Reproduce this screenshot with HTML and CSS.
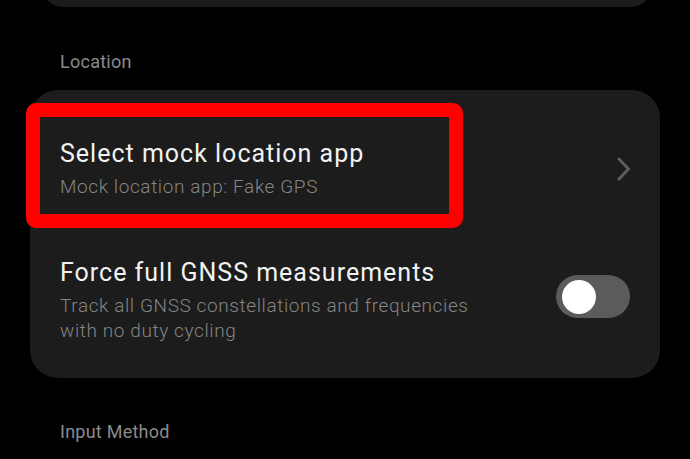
FILE: index.html
```html
<!DOCTYPE html>
<html lang="en">
<head>
<meta charset="utf-8">
<title>Developer options</title>
<link rel="stylesheet" href="styles.css">
</head>
<body>
<div class="screen">
  <div class="card card-top"></div>
  <div class="section-label label-location">Location</div>
  <div class="card card-main">
    <div class="row row-first">
      <div class="row-text">
        <div class="row-title">Select mock location app</div>
        <div class="row-sub">Mock location app: Fake GPS</div>
      </div>
      <svg class="chevron" width="14" height="24" viewBox="0 0 14 24" aria-hidden="true">
        <path d="M2 2 L11.5 12 L2 22" fill="none" stroke="#5e5e5e" stroke-width="3" stroke-linecap="round" stroke-linejoin="round"/>
      </svg>
    </div>
    <div class="row row-second">
      <div class="row-text">
        <div class="row-title">Force full GNSS measurements</div>
        <div class="row-sub">Track all GNSS constellations and frequencies<br>with no duty cycling</div>
      </div>
      <div class="toggle"><div class="knob"></div></div>
    </div>
    <div class="highlight"></div>
  </div>
  <div class="section-label label-input">Input Method</div>
</div>
</body>
</html>
```

FILE: styles.css
```css
html, body {
  margin: 0;
  padding: 0;
  background: #000;
}
body {
  font-family: Roboto, "Noto Sans", "Liberation Sans", sans-serif;
  width: 690px;
  height: 459px;
  overflow: hidden;
}
.screen {
  display: flex;
  flex-direction: column;
}
.card {
  background: #1c1c1c;
}
.card-top {
  height: 60px;
  margin: -53px 36px 0 40px;
  border-radius: 24px;
}
.section-label {
  font-size: 18px;
  line-height: 22px;
  color: #8b8b8b;
  padding-left: 60px;
  letter-spacing: 0.25px;
}
.label-location {
  margin-top: 44px;
  margin-bottom: 17px;
}
.label-input {
  margin-top: 43px;
}
.card-main {
  position: relative;
  margin: 0 30px;
  border-radius: 28px;
  padding: 0 30px;
}
.row {
  display: flex;
  align-items: center;
  justify-content: space-between;
}
.row-first {
  padding: 49px 0 30px;
}
.row-second {
  padding: 29px 0 35px;
}
.row-title {
  font-size: 25px;
  line-height: 30px;
  color: #f2f2f2;
  letter-spacing: 1px;
  margin-bottom: 5px;
}
.row-sub {
  font-size: 19px;
  line-height: 25px;
  color: #858585;
  font-weight: 300;
  letter-spacing: 0.6px;
}
.chevron {
  display: block;
  margin-right: -1px;
}
.toggle {
  width: 74px;
  height: 43px;
  border-radius: 22px;
  background: #5b5b5b;
  display: flex;
  align-items: center;
  padding-left: 6px;
  box-sizing: border-box;
  margin-top: -8px;
}
.knob {
  width: 34px;
  height: 34px;
  border-radius: 50%;
  background: #fff;
}
.highlight {
  position: absolute;
  left: -4px;
  top: 13px;
  width: 437px;
  height: 125px;
  box-sizing: border-box;
  border: 14px solid #ff0000;
  border-radius: 10px;
  pointer-events: none;
}
```
